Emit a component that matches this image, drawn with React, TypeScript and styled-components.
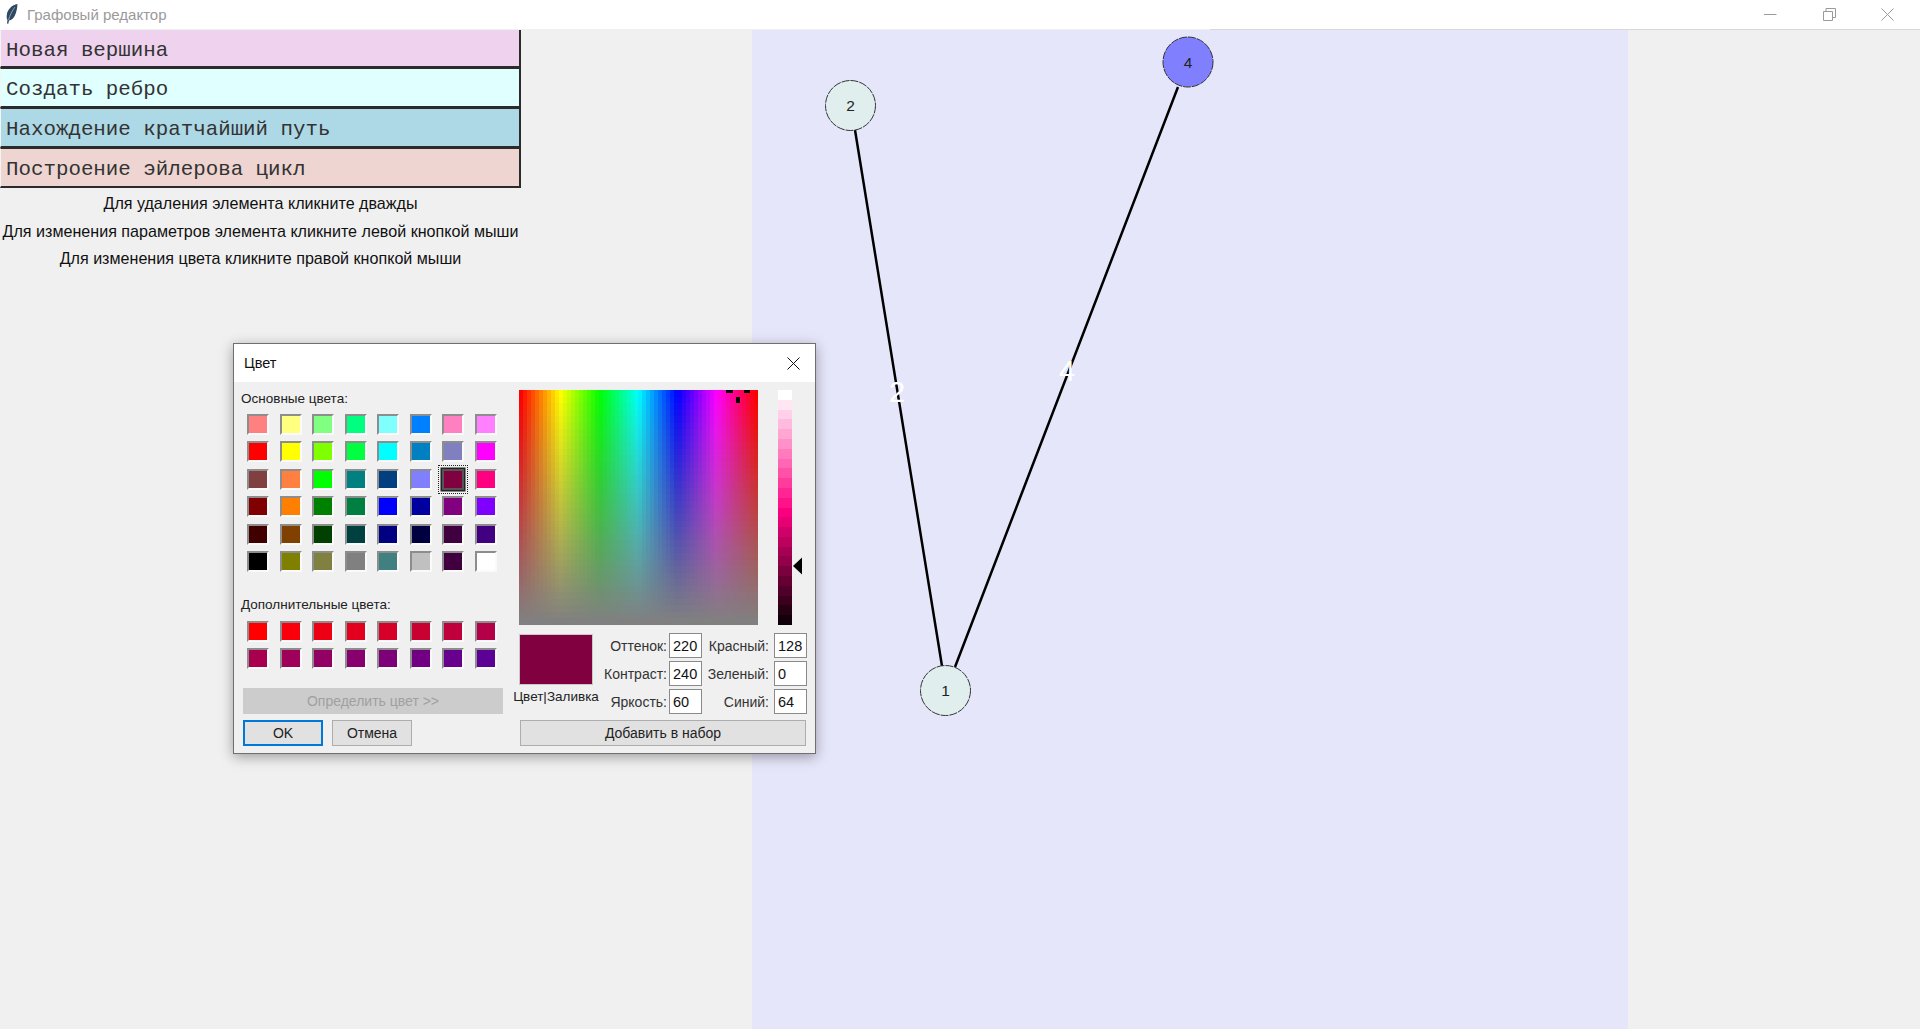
import React from 'react'
import styled, { createGlobalStyle } from 'styled-components'

const GlobalStyle = createGlobalStyle`
  html, body {
    margin: 0;
    height: 100%;
    background: #f0f0f0;
    overflow: hidden;
  }
  * {
    box-sizing: border-box;
  }
`

const Window = styled.div`
  position: relative;
  width: 1920px;
  height: 1029px;
  display: flex;
  flex-direction: column;
  font-family: 'Liberation Sans', Arial, sans-serif;
  color: #111;
`
const TitleBar = styled.header`
  height: 30px;
  flex: none;
  display: flex;
  align-items: center;
  justify-content: space-between;
  padding: 0 3px 1px 6px;
  background: #fff;
  border-bottom: 1px solid transparent;
  border-image: linear-gradient(
      to right,
      #fff 63px,
      #f0f0f0 63px,
      #f0f0f0 1210px,
      #d8d8d8 1210px
    )
    1;
`
const TitleLeft = styled.div`
  display: flex;
  align-items: center;
  gap: 9px;
`
const TitleText = styled.span`
  font-size: 15px;
  color: #9a9a9a;
`
const WindowControls = styled.div`
  display: flex;
`
const ControlButton = styled.div`
  width: 58.5px;
  height: 24px;
  display: flex;
  align-items: center;
  justify-content: center;
`
const Main = styled.main`
  flex: 1;
  display: flex;
  min-height: 0;
`
const LeftPane = styled.section`
  width: 752px;
  flex: none;
`
const ButtonStack = styled.div`
  width: 521px;
  display: flex;
  flex-direction: column;
`
const ToolButton = styled.div<{ $bg: string }>`
  height: 40px;
  display: flex;
  align-items: center;
  padding: 4px 0 0 5px;
  background: ${(p) => p.$bg};
  border-style: solid;
  border-width: 1px 2px 2px 1px;
  border-color: #2b2b2b #2b2b2b #2b2b2b #f4f4f4;
  font-family: 'Liberation Mono', 'Courier New', monospace;
  font-size: 20.8px;
  color: #333;
  &:first-child {
    height: 38px;
    border-top: none;
  }
`
const HelpList = styled.div`
  width: 521px;
  padding-top: 2px;
`
const HelpLine = styled.div`
  height: 27.5px;
  line-height: 27.5px;
  text-align: center;
  font-size: 16.1px;
  white-space: nowrap;
`
const Canvas = styled.section`
  width: 876px;
  flex: none;
  background: #e6e6fa;
`
const GraphSvg = styled.svg`
  display: block;
  width: 100%;
  height: 100%;
`

const Dialog = styled.div`
  position: absolute;
  left: 233px;
  top: 343px;
  width: 583px;
  height: 411px;
  background: #f0f0f0;
  border: 1px solid #6f6f6f;
  box-shadow: 0 3px 12px rgba(0, 0, 0, 0.35);
  font-size: 13.5px;
  display: flex;
  flex-direction: column;
`
const DialogHeader = styled.div`
  height: 38px;
  flex: none;
  background: #fff;
  display: flex;
  align-items: center;
  justify-content: space-between;
  padding: 0 15px 0 10px;
  font-size: 14.5px;
`
const DialogBody = styled.div`
  flex: 1;
  display: flex;
  padding-left: 7px;
`
const PaletteColumn = styled.div`
  width: 272px;
  flex: none;
  padding-top: 10px;
`
const GroupLabel = styled.div<{ $mt?: number }>`
  height: 14px;
  line-height: 14px;
  margin-top: ${(p) => p.$mt || 0}px;
  color: #222;
  white-space: nowrap;
`
const SwatchGrid = styled.div<{ $mt: number }>`
  display: grid;
  grid-template-columns: repeat(8, 22px);
  grid-auto-rows: 21px;
  column-gap: 10.5px;
  row-gap: 6.4px;
  margin: ${(p) => p.$mt}px 0 0 6px;
`
const Swatch = styled.div<{ $color: string; $selected?: boolean }>`
  position: relative;
  background: ${(p) => p.$color};
  border-style: solid;
  border-width: 2px;
  border-color: #8d8d8d #fafafa #fafafa #8d8d8d;
  ${(p) =>
    p.$selected &&
    `
    border-color: #555;
    box-shadow: 0 0 0 1.5px #222;
    &::after {
      content: '';
      position: absolute;
      inset: -6px;
      border: 1px dotted #222;
    }
  `}
`
const PaleButton = styled.div<{ $w?: number; $disabled?: boolean; $primary?: boolean }>`
  width: ${(p) => (p.$w ? `${p.$w}px` : '100%')};
  height: 26px;
  display: flex;
  align-items: center;
  justify-content: center;
  background: ${(p) => (p.$disabled ? '#cccccc' : '#e1e1e1')};
  color: ${(p) => (p.$disabled ? '#a0a0a0' : '#222')};
  font-size: 14px;
  border: ${(p) => (p.$primary ? '2px solid #0078d7' : p.$disabled ? 'none' : '1px solid #adadad')};
`
const DefineRow = styled.div`
  margin: 18.5px 10px 0 2px;
`
const ActionRow = styled.div`
  display: flex;
  gap: 9px;
  margin: 6.5px 0 0 2px;
`
const PickerColumn = styled.div`
  padding-top: 8px;
`
const PickerTop = styled.div`
  display: flex;
  gap: 20px;
  margin-left: 6px;
`
const SpectrumBox = styled.div`
  position: relative;
  width: 239px;
  height: 235px;
  overflow: hidden;
`
const hueBands = (): string => {
  const stops = ['#f00', '#ff0', '#0f0', '#0ff', '#00f', '#f0f', '#f00']
  const n = 60
  const parts: string[] = []
  const rgb = (h: string) => [1, 2, 3].map((i) => (h[i] === 'f' ? 255 : 0))
  for (let i = 0; i < n; i++) {
    const t = (i / (n - 1)) * 6
    const a = Math.min(Math.floor(t), 5)
    const f = t - a
    const ca = rgb(stops[a])
    const cb = rgb(stops[a + 1])
    const c = ca.map((v, k) => Math.round(v + (cb[k] - v) * f))
    parts.push(`rgb(${c.join(',')}) ${(i / n) * 100}% ${((i + 1) / n) * 100}%`)
  }
  return parts.join(',')
}
const grayBands = (): string => {
  const n = 36
  const parts: string[] = []
  for (let i = 0; i < n; i++) {
    parts.push(`rgba(128,128,128,${(i / (n - 1)).toFixed(3)}) ${(i / n) * 100}% ${((i + 1) / n) * 100}%`)
  }
  return parts.join(',')
}
const lumBands = (): string => {
  const n = 24
  const parts: string[] = []
  for (let i = 0; i < n; i++) {
    const t = (i + 0.2) / n
    const c =
      t < 0.5
        ? [255, 255 * (1 - t * 2), 255 - 127 * t * 2]
        : [255 * (2 - t * 2), 0, 128 * (2 - t * 2)]
    const color = i === 0 ? '#fff' : `rgb(${c.map(Math.round).join(',')})`
    parts.push(`${color} ${(i / n) * 100}% ${((i + 1) / n) * 100}%`)
  }
  return parts.join(',')
}
const Spectrum = styled.div`
  width: 100%;
  height: 100%;
  background: linear-gradient(to bottom, ${grayBands()}), linear-gradient(to right, ${hueBands()});
`
const CrossMark = styled.i<{ $x: number; $y: number; $w: number; $h: number }>`
  position: absolute;
  left: ${(p) => p.$x}px;
  top: ${(p) => p.$y}px;
  width: ${(p) => p.$w}px;
  height: ${(p) => p.$h}px;
  background: #000;
`
const LumBox = styled.div`
  position: relative;
  width: 14px;
  height: 235px;
  background: linear-gradient(to bottom, ${lumBands()});
`
const LumArrow = styled.svg`
  position: absolute;
  left: 15px;
  top: 167px;
`
const PickerBottom = styled.div`
  display: flex;
  margin-top: 8px;
`
const PreviewBlock = styled.div`
  width: 86px;
  flex: none;
  display: flex;
  flex-direction: column;
  align-items: center;
  padding-top: 1px;
`
const Preview = styled.div`
  width: 74px;
  height: 51px;
  background: #800040;
  border: 1px solid #c8c8c8;
`
const PreviewCaption = styled.div`
  margin-top: 5px;
  line-height: 14px;
  white-space: nowrap;
  color: #222;
`
const FieldGrid = styled.div`
  display: grid;
  grid-template-columns: 70px 33px 72px 33px;
  grid-auto-rows: 25px;
  row-gap: 3px;
`
const FieldLabel = styled.div<{ $second?: boolean }>`
  display: flex;
  align-items: center;
  justify-content: flex-end;
  padding-right: ${(p) => (p.$second ? 5 : 2)}px;
  white-space: nowrap;
  color: #333;
  font-size: 14px;
`
const FieldBox = styled.div`
  display: flex;
  align-items: center;
  padding-left: 3px;
  background: #fff;
  border: 1px solid #8a8a8a;
  font-size: 14.5px;
`
const AddRow = styled.div`
  width: 286px;
  margin: 6px 0 0 7px;
`

const basicColors = [
  '#ff8080', '#ffff80', '#80ff80', '#00ff80', '#80ffff', '#0080ff', '#ff80c0', '#ff80ff',
  '#ff0000', '#ffff00', '#80ff00', '#00ff40', '#00ffff', '#0080c0', '#8080c0', '#ff00ff',
  '#804040', '#ff8040', '#00ff00', '#008080', '#004080', '#8080ff', '#800040', '#ff0080',
  '#800000', '#ff8000', '#008000', '#008040', '#0000ff', '#0000a0', '#800080', '#8000ff',
  '#400000', '#804000', '#004000', '#004040', '#000080', '#000040', '#400040', '#400080',
  '#000000', '#808000', '#808040', '#808080', '#408080', '#c0c0c0', '#400040', '#ffffff',
]
const customColors = [
  '#ff0000', '#fa000a', '#ee0014', '#e3001e', '#d60028', '#c90032', '#bf003c', '#b40046',
  '#a8004f', '#9e005a', '#930064', '#88006e', '#7d0078', '#720082', '#67008c', '#5c0096',
]
const tools = [
  { label: 'Новая вершина', bg: '#eed2ee' },
  { label: 'Создать ребро', bg: '#e0ffff' },
  { label: 'Нахождение кратчайший путь', bg: '#add8e6' },
  { label: 'Построение эйлерова цикл', bg: '#eed5d2' },
]
const hints = [
  'Для удаления элемента кликните дважды',
  'Для изменения параметров элемента кликните левой кнопкой мыши',
  'Для изменения цвета кликните правой кнопкой мыши',
]
const nodes = [
  { id: '2', x: 850.5, y: 105.5, fill: '#e0eeee' },
  { id: '4', x: 1188, y: 62, fill: '#8080ff' },
  { id: '1', x: 945.5, y: 690.5, fill: '#e0eeee' },
]
const fields = [
  ['Оттенок:', '220', 'Красный:', '128'],
  ['Контраст:', '240', 'Зеленый:', '0'],
  ['Яркость:', '60', 'Синий:', '64'],
]

export default function App() {
  return (
    <Window>
      <GlobalStyle />
      <TitleBar>
        <TitleLeft>
          <svg width="12" height="20" viewBox="0 0 12 20">
            <path d="M11.500 0C6 1 1.500 5 .8 11c-.3 2.500 0 4 .7 5L1 19.500l1.300.3.7-3.300C8 16 11 9 11.500 0z" fill="#2f4760" />
            <path d="M9 3C6 7 4 11 2.500 16" stroke="#9fb4c8" strokeWidth="0.8" fill="none" />
          </svg>
          <TitleText>Графовый редактор</TitleText>
        </TitleLeft>
        <WindowControls>
          <ControlButton>
            <svg width="13" height="3" viewBox="0 0 13 3">
              <path d="M0 1.500H12.500" stroke="#9a9a9a" strokeWidth="1" />
            </svg>
          </ControlButton>
          <ControlButton>
            <svg width="13" height="13" viewBox="0 0 13 13" fill="none" stroke="#9a9a9a">
              <path d="M.5 3.500h9v9h-9z" />
              <path d="M3 3.500V.5h9.500v9H9.500" />
            </svg>
          </ControlButton>
          <ControlButton>
            <svg width="13" height="13" viewBox="0 0 13 13" stroke="#9a9a9a">
              <path d="M.5 .5l12 12M12.500 .5l-12 12" />
            </svg>
          </ControlButton>
        </WindowControls>
      </TitleBar>
      <Main>
        <LeftPane>
          <ButtonStack>
            {tools.map((t) => (
              <ToolButton key={t.label} $bg={t.bg}>
                {t.label}
              </ToolButton>
            ))}
          </ButtonStack>
          <HelpList>
            {hints.map((h) => (
              <HelpLine key={h}>{h}</HelpLine>
            ))}
          </HelpList>
        </LeftPane>
        <Canvas>
          <GraphSvg viewBox="752 30 876 999">
            <path d="M855 130L942 666M1178 87L955 667" stroke="#000" strokeWidth="2.500" />
            <text x="897" y="402" fill="#fff" fontSize="29" textAnchor="middle">2</text>
            <text x="1067" y="381" fill="#fff" fontSize="29" textAnchor="middle">4</text>
            {nodes.map((n) => (
              <g key={n.id}>
                <circle cx={n.x} cy={n.y} r={25} fill={n.fill} stroke="#333" strokeWidth="1" strokeDasharray="8 1" />
                <text x={n.x} y={n.y + 5.500} fill="#222" fontSize="15.500" textAnchor="middle">{n.id}</text>
              </g>
            ))}
          </GraphSvg>
        </Canvas>
      </Main>
      <Dialog>
        <DialogHeader>
          Цвет
          <svg width="13" height="13" viewBox="0 0 13 13" stroke="#111">
            <path d="M.5 .5l12 12M12.500 .5l-12 12" />
          </svg>
        </DialogHeader>
        <DialogBody>
          <PaletteColumn>
            <GroupLabel>Основные цвета:</GroupLabel>
            <SwatchGrid $mt={8}>
              {basicColors.map((c, i) => (
                <Swatch key={i} $color={c} $selected={i === 22} />
              ))}
            </SwatchGrid>
            <GroupLabel $mt={26}>Дополнительные цвета:</GroupLabel>
            <SwatchGrid $mt={9}>
              {customColors.map((c, i) => (
                <Swatch key={i} $color={c} />
              ))}
            </SwatchGrid>
            <DefineRow>
              <PaleButton $disabled>Определить цвет &gt;&gt;</PaleButton>
            </DefineRow>
            <ActionRow>
              <PaleButton $w={80} $primary>OK</PaleButton>
              <PaleButton $w={80}>Отмена</PaleButton>
            </ActionRow>
          </PaletteColumn>
          <PickerColumn>
            <PickerTop>
              <SpectrumBox>
                <Spectrum />
                <CrossMark $x={207} $y={0} $w={7} $h={3} />
                <CrossMark $x={225} $y={0} $w={6} $h={3} />
                <CrossMark $x={217} $y={7} $w={4} $h={6} />
              </SpectrumBox>
              <LumBox>
                <LumArrow width="10" height="18" viewBox="0 0 10 18">
                  <path d="M9 0.500V17.500L0 9z" fill="#000" />
                </LumArrow>
              </LumBox>
            </PickerTop>
            <PickerBottom>
              <PreviewBlock>
                <Preview />
                <PreviewCaption>Цвет|Заливка</PreviewCaption>
              </PreviewBlock>
              <div>
                <FieldGrid>
                  {fields.map((f) => (
                    <React.Fragment key={f[0]}>
                      <FieldLabel>{f[0]}</FieldLabel>
                      <FieldBox>{f[1]}</FieldBox>
                      <FieldLabel $second>{f[2]}</FieldLabel>
                      <FieldBox>{f[3]}</FieldBox>
                    </React.Fragment>
                  ))}
                </FieldGrid>
              </div>
            </PickerBottom>
            <AddRow>
              <PaleButton>Добавить в набор</PaleButton>
            </AddRow>
          </PickerColumn>
        </DialogBody>
      </Dialog>
    </Window>
  )
}
